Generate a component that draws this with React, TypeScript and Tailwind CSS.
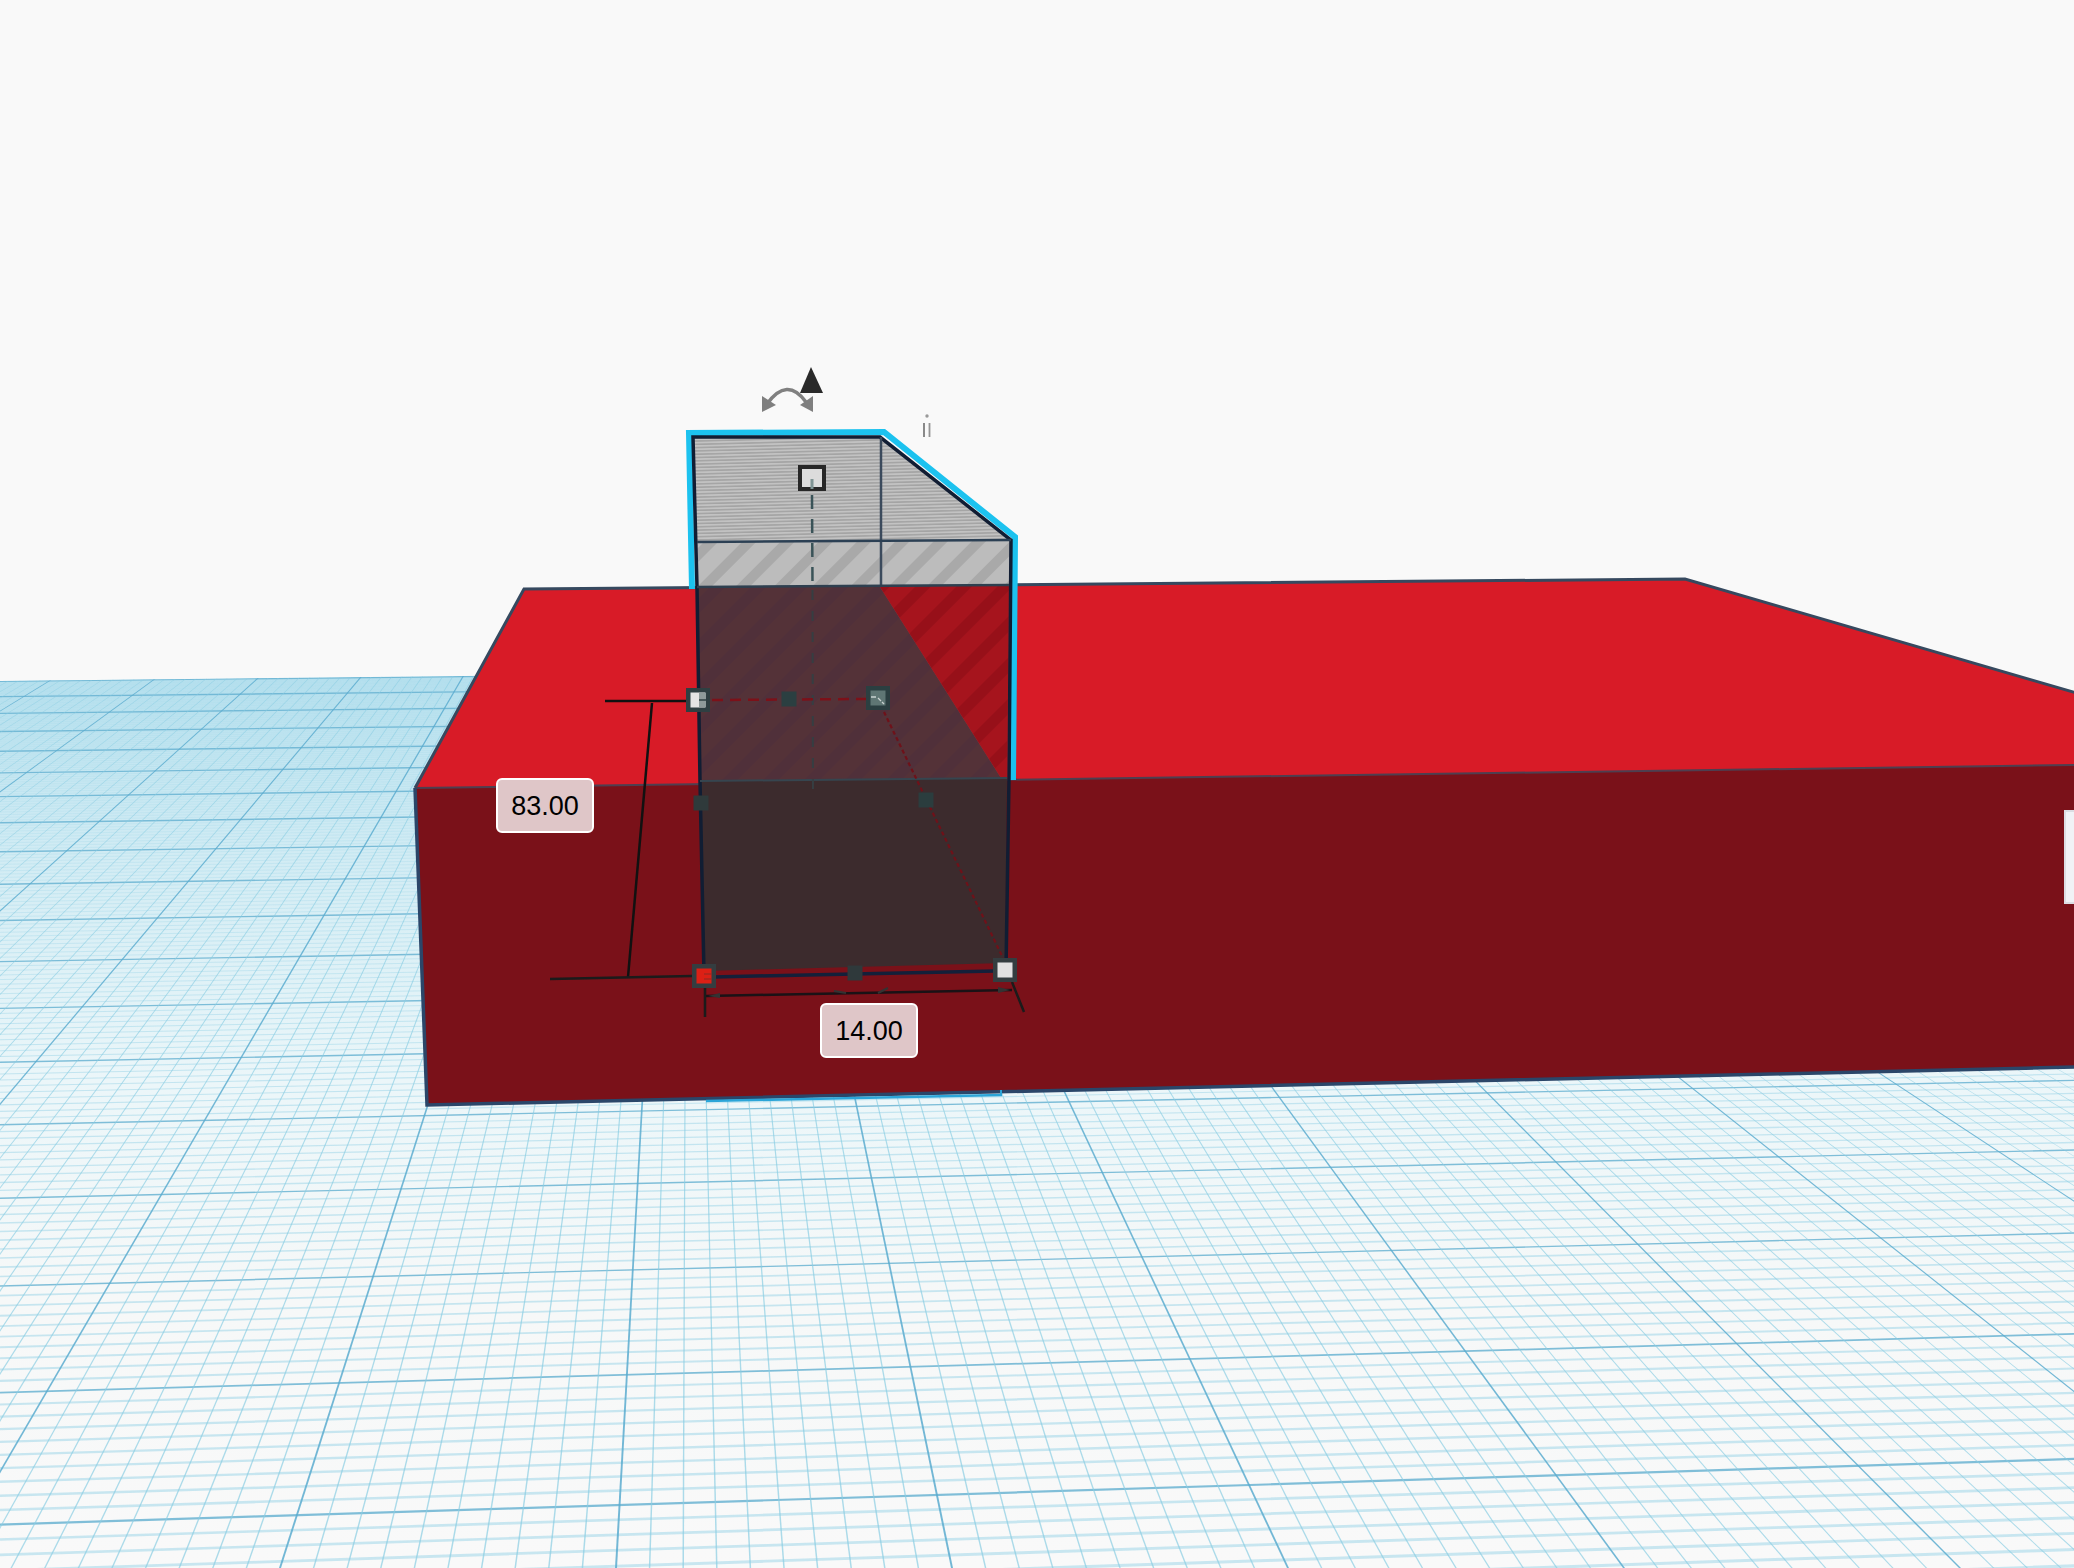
import React from "react";

const VY = 290;
const V1X = 688;
const V2X = 39000;

function farY(k: number, x: number) {
  const y0 = VY + 1 / (0.00081 + k * 9.7e-5);
  return y0 + ((VY - y0) * x) / V2X;
}

function tapered(x1568: number, aW: number, bW: number) {
  const at = (y: number) => V1X + ((x1568 - V1X) * (y - VY)) / (1568 - VY);
  const y1 = 650;
  const y2 = 1600;
  const t1 = (y1 - 680) / 888;
  const t2 = (y2 - 680) / 888;
  const w1 = aW + (bW - aW) * t1;
  const w2 = aW + (bW - aW) * t2;
  return `${at(y1) - w1 / 2},${y1} ${at(y1) + w1 / 2},${y1} ${at(y2) + w2 / 2},${y2} ${at(y2) - w2 / 2},${y2}`;
}

function Grid() {
  const horiz: React.ReactNode[] = [];
  const vert: React.ReactNode[] = [];
  for (let i = -10; i <= 180; i++) {
    const k = i / 10;
    const major = i % 10 === 0;
    const yL = farY(k, 0);
    const yR = farY(k, 2074);
    const scale = ((yL - VY) / 1235) ** 2;
    const w = major ? Math.max(1.4, 2.2 * scale) : Math.max(0.45, 2.6 * scale);
    horiz.push(
      <line
        key={`h${i}`}
        x1={0}
        y1={yL}
        x2={2074}
        y2={yR}
        stroke={major ? "#62afd0" : "#a6d9ea"}
        strokeOpacity={major ? 0.8 : 0.6}
        strokeWidth={w}
      />,
    );
  }
  for (let j = -100; j <= 110; j++) {
    const major = ((j % 10) + 10) % 10 === 0;
    const x = -56 + 33.6 * j;
    vert.push(
      <polygon
        key={`v${j}`}
        points={major ? tapered(x, 1.4, 2) : tapered(x, 0.85, 1.5)}
        fill={major ? "#5aaccf" : "#8acde3"}
        fillOpacity={major ? 0.85 : 0.7}
      />,
    );
  }
  return (
    <g clipPath="url(#groundClip)">
      <rect x={0} y={600} width={2074} height={968} fill="url(#groundFade)" />
      {horiz}
      {vert}
    </g>
  );
}

function Handle({ cx, cy, size = 24, inner = 15, outer = "#2f3f42", fill }: { cx: number; cy: number; size?: number; inner?: number; outer?: string; fill?: string }) {
  return (
    <g>
      <rect x={cx - size / 2} y={cy - size / 2} width={size} height={size} fill={outer} />
      {fill && <rect x={cx - inner / 2} y={cy - inner / 2} width={inner} height={inner} fill={fill} />}
    </g>
  );
}

function Label({ text, className }: { text: string; className: string }) {
  return (
    <div
      className={`absolute flex h-[55px] w-[98px] items-center justify-center rounded-[6px] border-2 border-white bg-[#dfc6c8] pt-[2px] font-['Liberation_Sans',Arial,sans-serif] text-[27px] leading-none text-black ${className}`}
    >
      {text}
    </div>
  );
}

export default function App() {
  return (
    <div className="relative h-[1568px] w-[2074px] overflow-hidden bg-[#f9f9f9]">
      <svg className="block blur-[0.6px]" width={2074} height={1568} viewBox="0 0 2074 1568">
        <defs>
          <clipPath id="groundClip">
            <polygon points="-10,681 560,675 1000,750 2084,900 2084,1578 -10,1578" />
          </clipPath>
          <linearGradient id="groundFade" gradientUnits="userSpaceOnUse" x1={0} y1={680} x2={0} y2={1568}>
            <stop offset="0" stopColor="#b8e1ef" />
            <stop offset="0.2" stopColor="#d2ecf4" />
            <stop offset="0.45" stopColor="#ebf6f9" />
            <stop offset="0.7" stopColor="#f6f8f8" />
            <stop offset="1" stopColor="#f9f9f9" />
          </linearGradient>
          <pattern id="hatchTop" patternUnits="userSpaceOnUse" width={40} height={3.3} patternTransform="rotate(-1.4)">
            <rect width={40} height={3.3} fill="#a4a4a4" />
            <rect width={40} height={1.7} fill="#c2c2c2" />
          </pattern>
          <pattern id="stripeGrey" patternUnits="userSpaceOnUse" width={27} height={27} patternTransform="rotate(45)">
            <rect width={27} height={27} fill="#a9a9a9" />
            <rect width={17} height={27} fill="#bcbcbc" />
          </pattern>
          <pattern id="stripeDark" patternUnits="userSpaceOnUse" width={29} height={29} patternTransform="rotate(45)">
            <rect width={29} height={29} fill="#50303a" />
            <rect width={18} height={29} fill="#543238" />
          </pattern>
          <pattern id="stripeRed" patternUnits="userSpaceOnUse" width={29} height={29} patternTransform="rotate(45)">
            <rect width={29} height={29} fill="#971019" />
            <rect width={18} height={29} fill="#a6141d" />
          </pattern>
        </defs>

        <Grid />

        {/* red box */}
        <polygon points="524,589 1685,579 2074,692 2074,765 415,788" fill="#d81b27" />
        <polygon points="415,788 2074,765 2074,1067 427,1105" fill="#7a1119" />
        <polyline points="415,788 524,589 1685,579 2080,694" fill="none" stroke="#36495f" strokeWidth={3} />
        <line x1={415} y1={788} x2={2074} y2={765} stroke="#4e3f50" strokeWidth={2} />
        <polyline points="415,788 427,1105 2074,1067" fill="none" stroke="#2b4669" strokeWidth={3.5} />

        {/* cyan trace under the box */}
        <line x1={706} y1={1101} x2={1002} y2={1095} stroke="#2ba5d8" strokeWidth={2.5} />
        <line x1={1001} y1={1095} x2={1001} y2={1090} stroke="#2ba5d8" strokeWidth={2} />

        {/* selected shape: outline */}
        <polyline points="692,589 689,433 884,432 1015,537 1013,780" fill="none" stroke="#1cc2ef" strokeWidth={6} />

        {/* selected shape: faces */}
        <polygon points="693,437 880,437 1011,540 697,542" fill="url(#hatchTop)" />
        <polygon points="697,542 1011,540 1010,585 698,587" fill="url(#stripeGrey)" />
        <polygon points="880,587 1009,585 1007,778 1001,778" fill="url(#stripeRed)" />
        <polygon points="698,587 880,587 1001,778 700,781" fill="url(#stripeDark)" />
        <polygon points="700,781 1007,778 1005,963 703,971" fill="#3c2b2d" />

        {/* selected shape: edges */}
        <polyline points="704,975 700,781 697,587 693,437 880,437 1011,540 1009,778 1006,970" fill="none" stroke="#111d33" strokeWidth={3.5} />
        <line x1={881} y1={437} x2={881} y2={587} stroke="#3b4a5c" strokeWidth={2.5} />
        <line x1={697} y1={542} x2={1011} y2={540} stroke="#2c4054" strokeWidth={2.5} />
        <line x1={697} y1={587} x2={1009} y2={585} stroke="#2e3f4f" strokeWidth={2.5} />
        <line x1={700} y1={781} x2={1007} y2={778} stroke="#36454f" strokeWidth={2} />
        <line x1={713} y1={977} x2={995} y2={971} stroke="#14203a" strokeWidth={3.5} />

        {/* centre dashed axis */}
        <line x1={812} y1={495} x2={812.5} y2={586} stroke="#3a5358" strokeWidth={2.5} strokeDasharray="14 10" />
        <line x1={812.5} y1={590} x2={813} y2={800} stroke="#363e42" strokeWidth={2} strokeDasharray="10 11" />

        {/* red dashed guides */}
        <line x1={712} y1={700} x2={868} y2={699} stroke="#7c1119" strokeWidth={2.5} strokeDasharray="11 7" />
        <line x1={884} y1={712} x2={1003} y2={958} stroke="#6f1119" strokeWidth={2.2} strokeDasharray="4 3" />

        {/* dimension lines */}
        <line x1={605} y1={701} x2={687} y2={701} stroke="#111" strokeWidth={2.5} />
        <line x1={652} y1={703} x2={628} y2={977} stroke="#111" strokeWidth={2.5} />
        <line x1={550} y1={979} x2={692} y2={976} stroke="#1b1b1b" strokeWidth={2.5} />
        <line x1={706} y1={996} x2={1012} y2={990} stroke="#1a1216" strokeWidth={2.5} />
        <line x1={705} y1={985} x2={705} y2={1017} stroke="#1b1b1b" strokeWidth={2.5} />
        <line x1={1012} y1={982} x2={1024} y2={1012} stroke="#1b1b1b" strokeWidth={2.5} />
        <polygon points="708,996 720,993 720,998" fill="#333" />
        <polygon points="1010,990 998,987 998,993" fill="#333" />
        <path d="M834 991l12 2M878 993l10-5" stroke="#333" strokeWidth={2} fill="none" />

        {/* handles */}
        <Handle cx={698} cy={700} fill="#e4e4e4" outer="#2f3f42" />
        <rect x={699} y={693} width={7} height={14} fill="#8f9a9a" />
        <line x1={699} y1={700} x2={708} y2={700} stroke="#2f3f42" strokeWidth={1.5} />
        <Handle cx={878} cy={698} fill="#5f7674" outer="#2b3f41" />
        <path d="M871 697h5M878 698l3 3M882 702l2 2" stroke="#c9d2d0" strokeWidth={1.3} fill="none" />
        <Handle cx={789} cy={699} size={15} outer="#2b3f41" />
        <Handle cx={701} cy={803} size={15} outer="#2f3a3b" />
        <Handle cx={926} cy={800} size={15} outer="#2b3d3e" />
        <Handle cx={704} cy={976} fill="#dc2015" outer="#343d40" />
        <path d="M704 974h8M704 979h8" stroke="#8a2a24" strokeWidth={1.2} fill="none" />
        <Handle cx={1005} cy={970} fill="#e2e2e2" outer="#343d40" />
        <Handle cx={855} cy={973} size={15} outer="#2f393b" />
        <rect x={800} y={467} width={24} height={22} fill="#dcdcdc" stroke="#272727" strokeWidth={4} />
        <line x1={812} y1={479} x2={812} y2={489} stroke="#7f9494" strokeWidth={3} />

        {/* rotate arrow and cone */}
        <path d="M767 404Q787 376 806 402" fill="none" stroke="#808080" strokeWidth={3.5} />
        <polygon points="762,396 776,405 762,412" fill="#7f7f7f" />
        <polygon points="813,396 800,405 813,412" fill="#7f7f7f" />
        <polygon points="811,367 800,393 823,393" fill="#2a2a2a" />

        {/* small gray mark */}
        <circle cx={927} cy={416} r={1.7} fill="#9a9a9a" />
        <line x1={924} y1={423} x2={924} y2={437} stroke="#7d7d7d" strokeWidth={1.8} />
        <line x1={929.5} y1={423} x2={929.5} y2={437} stroke="#959595" strokeWidth={1.8} />
      </svg>

      <Label text="83.00" className="left-[496px] top-[778px]" />
      <Label text="14.00" className="left-[820px] top-[1003px]" />

      <div className="absolute left-[2064px] top-[810px] h-[94px] w-[10px] border-2 border-r-0 border-[#dcdde3] bg-[#f1f2f6]" />
    </div>
  );
}
